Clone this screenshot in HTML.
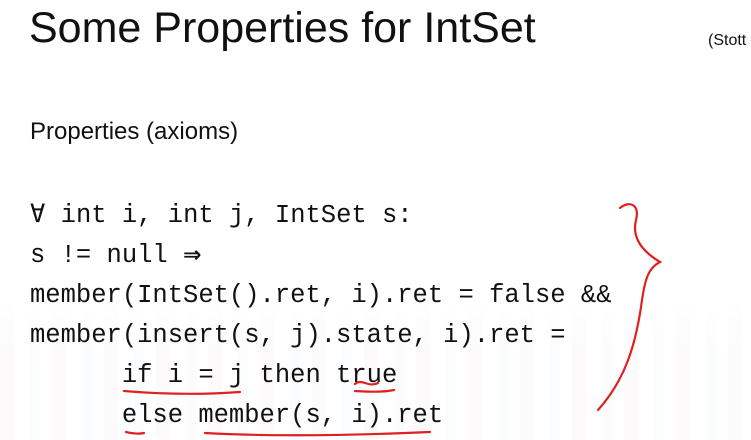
<!DOCTYPE html>
<html><head><style>
body{margin:0;width:751px;height:440px;background:#fff;position:relative;overflow:hidden;font-family:"Liberation Sans",sans-serif;color:#111}
.bars{position:absolute;left:0;top:300px;width:751px;height:140px;background:repeating-linear-gradient(90deg,rgba(230,210,210,.12) 0 14px,rgba(255,255,255,0) 14px 30px,rgba(210,220,235,.1) 30px 40px,rgba(255,255,255,0) 40px 52px);-webkit-mask:linear-gradient(#0000,#000 40%);}
.t{position:absolute;left:29px;top:4px;font-size:43px;white-space:nowrap}
.s{position:absolute;left:708px;top:32px;font-size:16px}
.p{position:absolute;left:30px;top:118px;font-size:24px}
.c{position:absolute;left:30px;top:196px;font-family:"Liberation Mono",monospace;font-size:25.5px;line-height:40px;white-space:pre;color:#111}
.c b{font-family:"DejaVu Sans",sans-serif;font-weight:bold;font-size:22px}
svg{position:absolute;left:0;top:0}
</style></head><body>
<div class="bars"></div>
<div class="t">Some Properties for IntSet</div>
<div class="s">(Stott</div>
<div class="p">Properties (axioms)</div>
<div class="c">∀ int i, int j, IntSet s:
s != null <b>⇒</b>
member(IntSet().ret, i).ret = false &amp;&amp;
member(insert(s, j).state, i).ret =
      if i = j then true
      else member(s, i).ret</div>
<svg width="751" height="440" fill="none" stroke="#e02020" stroke-width="2.2" stroke-linecap="round">
<path d="M620 208 C630 200 640 205 636 220 C632 236 640 250 660 262 C648 268 645 280 642 300 C636 345 625 380 598 410"/>
<path d="M124 391 C160 394 200 395 240 392"/>
<path d="M355 384 C362 378 368 388 378 383 M355 391 C370 392 385 392 394 390"/>
<path d="M126 432 C135 434 140 434 144 433"/>
<path d="M205 433 C260 436 340 436 430 432"/>
</svg>
</body></html>
